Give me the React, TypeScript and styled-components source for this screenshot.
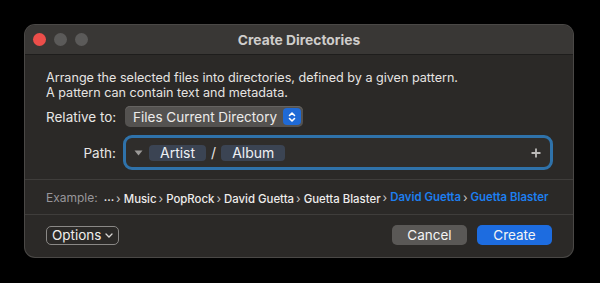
import styled, { createGlobalStyle } from 'styled-components';

const GlobalStyle = createGlobalStyle`
  html, body {
    margin: 0;
    padding: 0;
    background: #000;
  }
  body {
    font-family: Inter, 'Noto Sans', sans-serif;
    -webkit-font-smoothing: antialiased;
  }
`;

const Backdrop = styled.div`
  width: 600px;
  height: 283px;
  padding: 25px 0 0 25px;
  box-sizing: border-box;
  background: #000;
`;

const Window = styled.div`
  width: 548px;
  height: 232px;
  box-sizing: border-box;
  background: #2b2927;
  border-radius: 10px;
  box-shadow: 0 0 0 1px #4a4846;
  overflow: hidden;
  display: flex;
  flex-direction: column;
`;

const TitleBar = styled.div`
  height: 29px;
  flex-shrink: 0;
  background: #393735;
  border-bottom: 1px solid #1e1d1c;
  display: flex;
  align-items: center;
  position: relative;
  padding-left: 8px;
  gap: 8px;
`;

const Light = styled.span<{ $color: string }>`
  width: 13px;
  height: 13px;
  border-radius: 50%;
  background: ${({ $color }) => $color};
`;

const Title = styled.div`
  position: absolute;
  inset: 0;
  display: flex;
  align-items: center;
  justify-content: center;
  color: #cfcdcb;
  font-size: 13.8px;
  font-weight: 700;
  pointer-events: none;
`;

const Content = styled.div`
  padding: 16px 21px 0 21px;
  display: flex;
  flex-direction: column;
`;

const Description = styled.p`
  margin: 0;
  color: #e6e4e2;
  font-size: 12.6px;
  line-height: 14.5px;
`;

const FormRow = styled.div<{ $top: number }>`
  display: grid;
  grid-template-columns: 70px auto;
  column-gap: 9px;
  align-items: center;
  margin-top: ${({ $top }) => $top}px;
`;

const Label = styled.span`
  color: #e8e6e4;
  font-size: 13.5px;
  text-align: right;
  white-space: nowrap;
`;

const Popup = styled.div`
  width: 178px;
  height: 21px;
  box-sizing: border-box;
  background: #545250;
  border-radius: 5px;
  display: flex;
  align-items: center;
  justify-content: space-between;
  padding: 0 2px 0 8px;
  color: #ecebea;
  font-size: 13.5px;
  box-shadow: inset 0 1px 0 #656361;
`;

const Stepper = styled.span`
  width: 18px;
  height: 17px;
  border-radius: 4px;
  background: #1f6ad6;
  display: flex;
  align-items: center;
  justify-content: center;
`;

const PathField = styled.div`
  margin-left: -2px;
  width: 430px;
  height: 35px;
  box-sizing: border-box;
  border: 3px solid #2f72aa;
  border-radius: 9px;
  background: #2f2d2b;
  display: flex;
  align-items: center;
  padding: 0 9px 0 8px;
  gap: 4px;
`;

const Token = styled.span`
  background: #3b4453;
  color: #eef0f3;
  border-radius: 4px;
  height: 16px;
  line-height: 16px;
  padding: 0 11px;
  font-size: 14px;
`;

const Slash = styled.span`
  color: #e8e6e4;
  font-size: 14px;
  margin: 0 1px;
`;

const Grow = styled.span`
  flex: 1;
`;

const Divider = styled.div<{ $top: number }>`
  height: 1px;
  background: #3f3d3b;
  margin-top: ${({ $top }) => $top}px;
`;

const ExampleRow = styled.div`
  height: 34px;
  display: flex;
  align-items: center;
  padding-left: 21px;
  white-space: nowrap;
`;

const ExampleLabel = styled.span`
  color: #98969a;
  font-size: 12px;
  margin-right: 6px;
`;

const Crumb = styled.span<{ $active?: boolean }>`
  color: ${({ $active }) => ($active ? '#1d7ff0' : '#eeeceb')};
  font-weight: ${({ $active }) => ($active ? 600 : 500)};
  font-size: 11.4px;
`;

const Sep = styled.span`
  color: #c8c6c4;
  margin: 0 3px 0 2px;
  font-size: 12px;
`;

const Footer = styled.div`
  display: flex;
  align-items: center;
  padding: 10px 21px 0 21px;
  gap: 10px;
`;

const OptionsButton = styled.div`
  height: 19px;
  box-sizing: border-box;
  border: 1px solid #8a8886;
  border-radius: 5px;
  padding: 0 5px 0 5px;
  display: flex;
  align-items: center;
  gap: 4px;
  color: #f0eeec;
  font-size: 13.5px;
  margin-right: auto;
`;

const Button = styled.div<{ $primary?: boolean }>`
  width: 75px;
  height: 20px;
  border-radius: 5px;
  display: flex;
  align-items: center;
  justify-content: center;
  font-size: 13.5px;
  color: #f4f4f4;
  background: ${({ $primary }) => ($primary ? '#1d6ce0' : '#5a5856')};
`;

const crumbs = ['Music', 'PopRock', 'David Guetta', 'Guetta Blaster'];

export default function App() {
  return (
    <>
      <GlobalStyle />
      <Backdrop>
        <Window>
          <TitleBar>
            <Light $color="#ec4e4a" />
            <Light $color="#5b5a59" />
            <Light $color="#5b5a59" />
            <Title>Create Directories</Title>
          </TitleBar>
          <Content>
            <Description>
              Arrange the selected files into directories, defined by a given pattern.
              <br />
              A pattern can contain text and metadata.
            </Description>
            <FormRow $top={6}>
              <Label>Relative to:</Label>
              <Popup>
                Files Current Directory
                <Stepper>
                  <svg width="8" height="12" viewBox="0 0 8 12" fill="none" stroke="#fff" strokeWidth="1.6" strokeLinecap="round" strokeLinejoin="round">
                    <path d="M1.5 4.5 L4 2 L6.5 4.5" />
                    <path d="M1.5 7.5 L4 10 L6.5 7.5" />
                  </svg>
                </Stepper>
              </Popup>
            </FormRow>
            <FormRow $top={8}>
              <Label>Path:</Label>
              <PathField>
                <svg width="9" height="6" viewBox="0 0 9 6" style={{ marginRight: 2 }}>
                  <path d="M0.5 0.5 L8.5 0.5 L4.5 5.5 Z" fill="#9c9a98" />
                </svg>
                <Token>Artist</Token>
                <Slash>/</Slash>
                <Token>Album</Token>
                <Grow />
                <svg width="10" height="10" viewBox="0 0 10 10" stroke="#bdbbb9" strokeWidth="1.8">
                  <path d="M5 0.5 V9.5 M0.5 5 H9.5" />
                </svg>
              </PathField>
            </FormRow>
          </Content>
          <Divider $top={9} />
          <ExampleRow>
            <ExampleLabel>Example:</ExampleLabel>
            <Crumb>...</Crumb>
            {crumbs.map((c) => (
              <span key={c}>
                <Sep>›</Sep>
                <Crumb>{c}</Crumb>
              </span>
            ))}
            <Sep>›</Sep>
            <Crumb $active>David Guetta</Crumb>
            <Sep>›</Sep>
            <Crumb $active>Guetta Blaster</Crumb>
          </ExampleRow>
          <Divider $top={0} />
          <Footer>
            <OptionsButton>
              Options
              <svg width="8" height="5" viewBox="0 0 8 5" fill="none" stroke="#d8d6d4" strokeWidth="1.3" strokeLinecap="round">
                <path d="M1 1 L4 4 L7 1" />
              </svg>
            </OptionsButton>
            <Button>Cancel</Button>
            <Button $primary>Create</Button>
          </Footer>
        </Window>
      </Backdrop>
    </>
  );
}
